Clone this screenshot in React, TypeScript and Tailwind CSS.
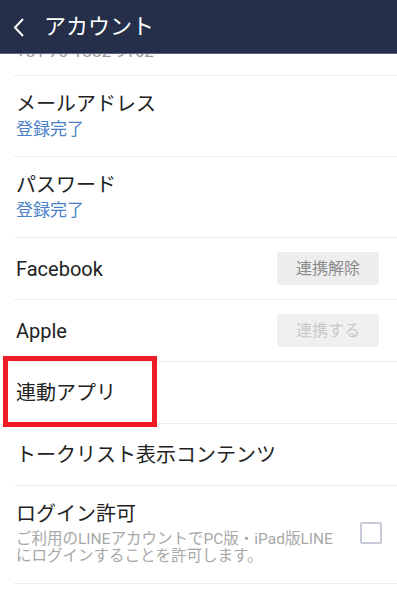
import React from "react";

const font = { fontFamily: 'Roboto, "Noto Sans CJK JP", sans-serif' };

function Row2({ title, sub, subClass }: { title: string; sub: string; subClass: string }) {
  return (
    <div className="ml-[14px] pl-[2px] border-b border-[#ececec] h-[81px] shrink-0 flex flex-col justify-center">
      <div className="text-[20px] leading-[26px] text-[#222]">{title}</div>
      <div className={"text-[17px] leading-[24px] " + subClass}>{sub}</div>
    </div>
  );
}

function Row1({ title, children }: { title: string; children?: React.ReactNode }) {
  return (
    <div className="ml-[14px] pl-[2px] pr-[18px] border-b border-[#ececec] h-[62px] flex items-center justify-between">
      <div className="text-[20px] leading-[26px] text-[#222]">{title}</div>
      {children}
    </div>
  );
}

export default function App() {
  return (
    <div className="w-[397px] h-[597px] overflow-hidden bg-white flex flex-col" style={font}>
      <div className="h-[54px] shrink-0 bg-[#252f4a] border-b border-[#5b6585] flex items-center">
        <svg width="14" height="22" viewBox="0 0 14 22" className="ml-[12px]">
          <polyline points="11,3 3,11.5 11,20" fill="none" stroke="#ffffff" strokeWidth="2" />
        </svg>
        <div className="ml-[18px] text-[22px] leading-[28px] text-white">アカウント</div>
      </div>
      <div className="h-[22px] shrink-0 overflow-hidden flex flex-col justify-end">
        <div className="ml-[14px] pl-[2px] border-b border-[#ececec] h-[81px] shrink-0 flex flex-col justify-end pb-[12px]">
          <div className="text-[20px] leading-[26px] text-[#222]">電話番号</div>
          <div className="text-[17px] leading-[24px] text-[#9a9a9a]">+81 70-1882-9162</div>
        </div>
      </div>
      <Row2 title="メールアドレス" sub="登録完了" subClass="text-[#4a80c8]" />
      <Row2 title="パスワード" sub="登録完了" subClass="text-[#4a80c8]" />
      <Row1 title="Facebook">
        <div className="w-[102px] h-[33px] rounded-[3px] bg-[#eeeeee] flex items-center justify-center text-[16px] text-[#8a8a8a]">
          連携解除
        </div>
      </Row1>
      <Row1 title="Apple">
        <div className="w-[102px] h-[33px] rounded-[3px] bg-[#f0f0f0] flex items-center justify-center text-[16px] text-[#c8c8c8]">
          連携する
        </div>
      </Row1>
      <div className="relative">
        <Row1 title="連動アプリ" />
        <div className="absolute top-[-6px] left-[3px] w-[154px] h-[71px] border-[5px] border-[#ee1c25]" />
      </div>
      <Row1 title="トークリスト表示コンテンツ" />
      <div className="ml-[14px] pl-[2px] pr-[15px] border-b border-[#ececec] pt-[15px] pb-[18px] flex items-center justify-between">
        <div>
          <div className="text-[20px] leading-[26px] text-[#222]">ログイン許可</div>
          <div className="mt-[4px] text-[15.5px] leading-[17px] text-[#a8a8a8]">
            ご利用のLINEアカウントでPC版・iPad版LINE
            <br />
            にログインすることを許可します。
          </div>
        </div>
        <div className="w-[22px] h-[22px] border-2 border-[#c8cbd9] rounded-[2px] shrink-0" />
      </div>
    </div>
  );
}
